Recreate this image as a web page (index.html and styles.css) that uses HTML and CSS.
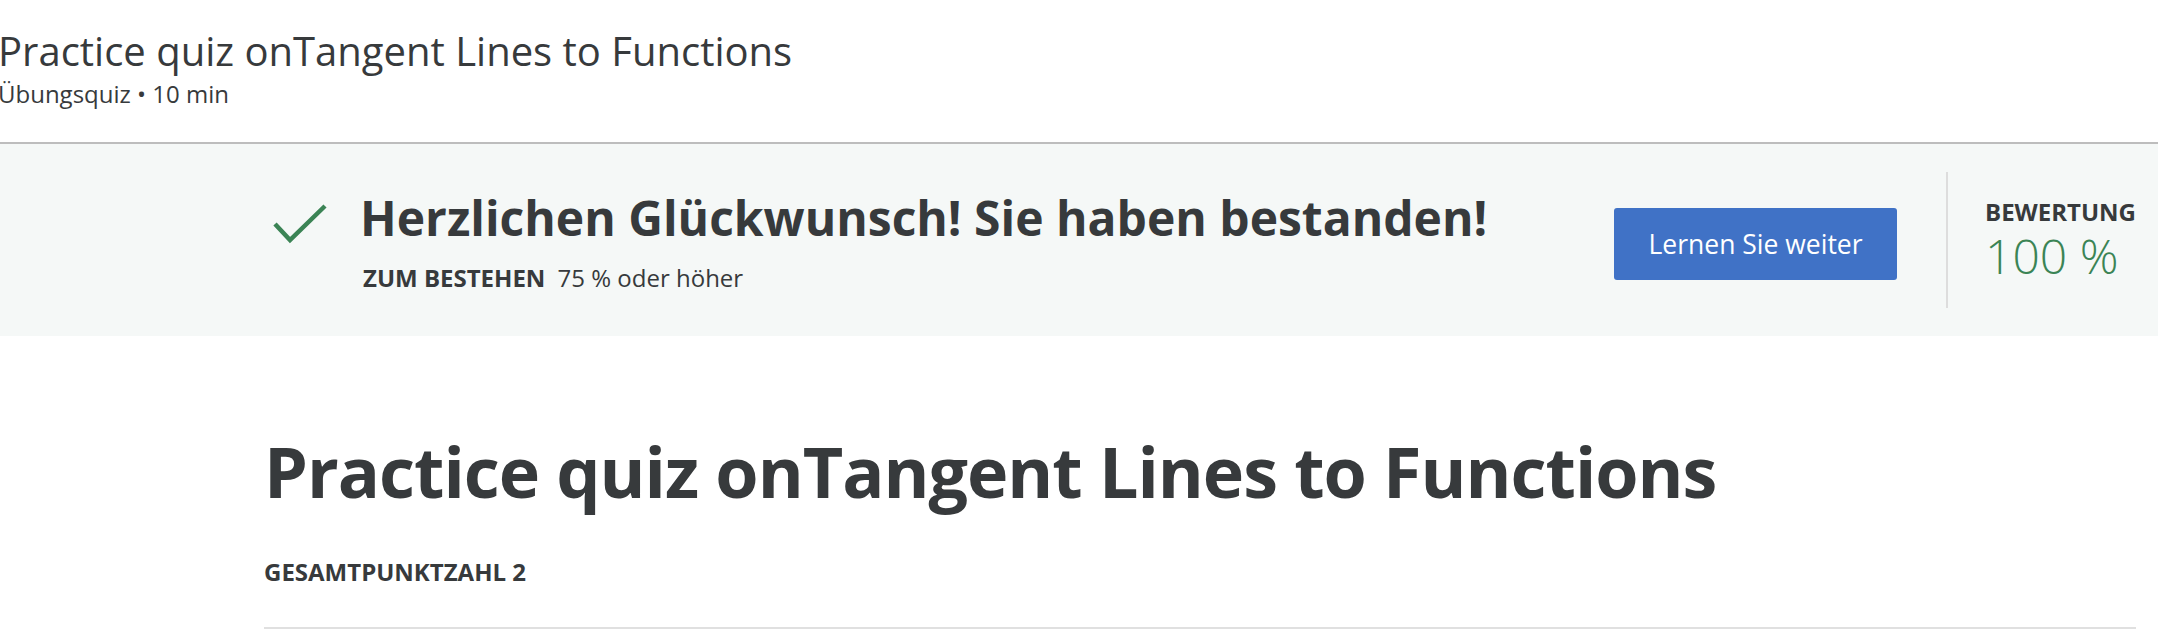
FILE: index.html
```html
<!DOCTYPE html>
<html lang="de">
<head>
<meta charset="utf-8">
<title>Practice quiz onTangent Lines to Functions</title>
<link rel="stylesheet" href="styles.css">
</head>
<body>
<header class="page-header">
  <h1 class="page-title">Practice quiz onTangent Lines to Functions</h1>
  <div class="page-meta">Übungsquiz • 10 min</div>
</header>
<section class="result-banner">
  <div class="banner-inner">
    <div class="result-main">
      <svg class="check-icon" viewBox="0 0 54 41" width="54" height="41" aria-hidden="true">
        <polyline points="2,21 17,37 52,3" fill="none" stroke="#3b8455" stroke-width="4.5"/>
      </svg>
      <div class="result-text">
        <h2 class="result-title">Herzlichen Glückwunsch! Sie haben bestanden!</h2>
        <div class="pass-info"><span class="pass-label">ZUM BESTEHEN</span> 75 % oder höher</div>
      </div>
    </div>
    <button class="continue-btn" type="button">Lernen Sie weiter</button>
    <div class="divider"></div>
    <div class="score">
      <div class="score-label">BEWERTUNG</div>
      <div class="score-value">100 %</div>
    </div>
  </div>
</section>
<main class="quiz">
  <h2 class="quiz-title">Practice quiz onTangent Lines to Functions</h2>
  <div class="quiz-points">GESAMTPUNKTZAHL 2</div>
  <hr class="quiz-rule">
</main>
</body>
</html>
```

FILE: styles.css
```css
html, body {
  margin: 0;
  padding: 0;
  background: #ffffff;
}
body {
  font-family: "Open Sans", "Noto Sans", sans-serif;
  color: #373a3c;
  width: 2158px;
  height: 640px;
  overflow: hidden;
}
.page-header {
  padding: 27px 0 33px 0;
  margin-left: -2px;
  border-bottom: 2px solid #bdbdbd;
}
.page-title {
  margin: 0;
  font-size: 40px;
  line-height: 48px;
  font-weight: 400;
}
.page-meta {
  margin-top: 4px;
  font-size: 24px;
  line-height: 30px;
}
.result-banner {
  background: #f5f8f7;
  height: 192px;
}
.banner-inner {
  display: flex;
  align-items: center;
  height: 100%;
  padding: 0 22px 0 264px;
}
.result-main {
  display: flex;
  align-items: flex-start;
  flex: 1;
}
.check-icon {
  margin: 17px 0 0 9px;
  flex: none;
}
.result-text {
  margin-left: 33px;
  margin-top: 4px;
}
.result-title {
  margin: 0;
  font-size: 48px;
  line-height: 56px;
  font-weight: 700;
}
.pass-info {
  margin-top: 16px;
  padding-left: 3px;
  font-size: 24px;
  line-height: 32px;
}
.pass-label {
  font-weight: 700;
  margin-right: 6px;
}
.continue-btn {
  width: 283px;
  height: 72px;
  background: #4072c6;
  color: #ffffff;
  border: none;
  border-radius: 3px;
  font-family: inherit;
  font-size: 26.5px;
  padding: 0;
  margin-top: 8px;
}
.divider {
  width: 2px;
  height: 136px;
  background: #dddddd;
  margin: 0 37px 0 49px;
}
.score-label {
  font-size: 24px;
  font-weight: 700;
  line-height: 32px;
}
.score-value {
  font-size: 48px;
  font-weight: 300;
  line-height: 56px;
  color: #3b8455;
}
.quiz {
  padding: 0 22px 0 264px;
}
.quiz-title {
  margin: 0;
  padding-top: 90px;
  font-size: 70px;
  line-height: 90px;
  font-weight: 700;
  letter-spacing: -1px;
}
.quiz-points {
  margin-top: 40px;
  font-size: 24px;
  line-height: 32px;
  font-weight: 700;
}
.quiz-rule {
  margin: 39px 0 0 0;
  border: none;
  height: 2px;
  background: #e0e0e0;
}
```
